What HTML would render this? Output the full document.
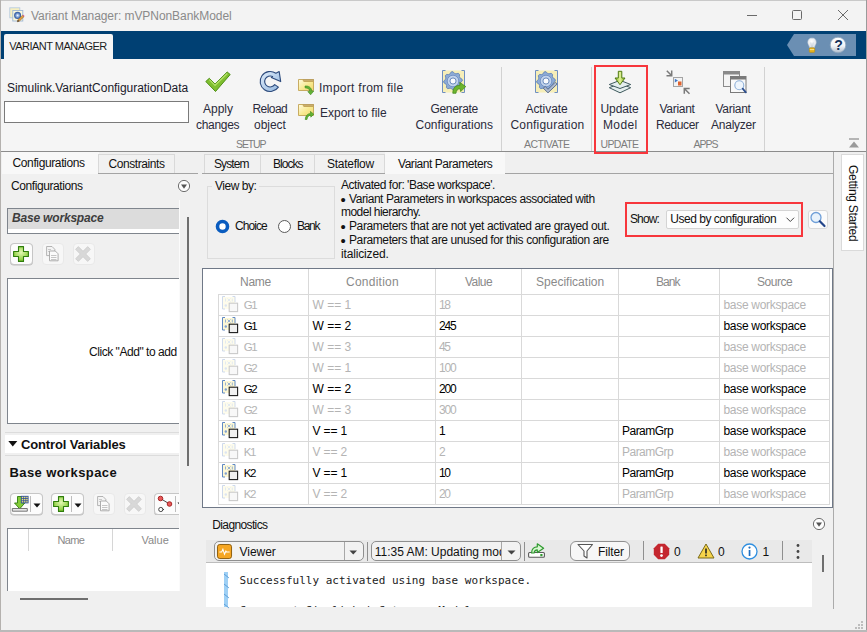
<!DOCTYPE html>
<html lang="en"><head><meta charset="utf-8"><title>Variant Manager: mVPNonBankModel</title>
<style>
html,body{margin:0;padding:0}
body{width:867px;height:632px;overflow:hidden;position:relative;background:#f0f0f0;font-family:"Liberation Sans",sans-serif;font-size:12px;color:#000}
.t{position:absolute;white-space:nowrap}
.a{position:absolute;box-sizing:border-box}
svg{position:absolute;overflow:visible}
</style></head><body>
<div class="a" style="left:0px;top:0px;width:867px;height:632px;background:#f0f0f0"></div>
<div class="a" style="left:1px;top:1px;width:865px;height:30px;background:#f3f3f3"></div>
<svg style="left:9px;top:7px" width="16" height="16" viewBox="0 0 16 16">
<rect x=".8" y=".8" width="10" height="10" fill="#f6efc0" stroke="#b7cbe0" stroke-width=".9"/>
<rect x="3.800" y="3.500" width="10" height="10.500" fill="#fbf8dc" stroke="#9db7d4" stroke-width=".9"/>
<circle cx="8.600" cy="8.400" r="2.900" fill="#8fafe0" stroke="#3f66a8" stroke-width="1.300"/>
<circle cx="8.600" cy="8.400" r=".9" fill="#f4f7fc"/>
<path d="M8.300 14.800 L8.900 12.700 L13.600 8.300 L15 9.700 L10.300 14.200 Z" fill="#e0a040" stroke="#8a5a20" stroke-width=".5"/>
<path d="M13.600 8.300 L14.300 7.700 L15.600 9 L15 9.700 Z" fill="#e0508a"/>
<path d="M8.300 14.800 L8.900 12.700 L10.300 14.200 Z" fill="#3a3a3a"/>
</svg><span class="t" style='left:31.00px;top:7.50px;font-size:12px;line-height:16px;color:#8a8a8a;letter-spacing:-0.061px;'>Variant Manager: mVPNonBankModel</span><svg style="left:740px;top:5px" width="120" height="22" viewBox="0 0 120 22">
<path d="M7 10.5h10" stroke="#6a6a6a" stroke-width="1" fill="none"/>
<rect x="52.5" y="5.5" width="9" height="9" fill="none" stroke="#6a6a6a" stroke-width="1" rx="1"/>
<path d="M98 5l10 10M108 5l-10 10" stroke="#6a6a6a" stroke-width="1" fill="none"/>
</svg><div class="a" style="left:1px;top:31px;width:865px;height:28px;background:#004073"></div>
<div class="a" style="left:4px;top:34px;width:109px;height:25px;background:#f5f5f5;border-radius:2px 2px 0 0"></div>
<span class="t" style='left:9.30px;top:39.00px;font-size:11px;line-height:15px;color:#1c1c1c;letter-spacing:-0.528px;'>VARIANT MANAGER</span><svg style="left:786px;top:33px" width="72" height="24" viewBox="0 0 72 24">
<defs><linearGradient id="hg" x1="0" y1="0" x2="0" y2="1"><stop offset="0" stop-color="#ffffff"/><stop offset=".55" stop-color="#f1f4f8"/><stop offset="1" stop-color="#aebccc"/></linearGradient>
<radialGradient id="bg" cx=".45" cy=".35" r=".7"><stop offset="0" stop-color="#ffffff"/><stop offset="1" stop-color="#d9dfe6"/></radialGradient></defs>
<path d="M1 12 L8 1 H70 V23 H8 Z" fill="#6b8fb3"/>
<path d="M26 5c-2.700 0-4.200 2.100-4.200 4.200 0 2 1.400 3.200 1.800 5.300h4.800c.4-2.100 1.800-3.300 1.800-5.300 0-2.100-1.500-4.200-4.200-4.200z" fill="url(#bg)" stroke="#cfd5dc" stroke-width=".5"/>
<path d="M24.800 9.500 L25.500 14 M27.200 9.500 L26.500 14" stroke="#b9c4d0" stroke-width=".6" fill="none"/>
<rect x="23.300" y="14.800" width="5.400" height="4.600" rx="1" fill="#e3b21f" stroke="#b8860b" stroke-width=".5"/>
<path d="M23.800 16.600h4.400" stroke="#fff3b0" stroke-width=".8"/>
<circle cx="52" cy="12" r="7.800" fill="url(#hg)" stroke="#8ea4bc" stroke-width=".8"/>
</svg><span class="t" style='left:834.20px;top:35.80px;font-size:14px;line-height:18px;color:#14315a;font-weight:bold;'>?</span><div class="a" style="left:1px;top:59px;width:865px;height:92px;background:#f5f5f5"></div>
<div class="a" style="left:1px;top:151px;width:865px;height:1px;background:#8c8c8c"></div>
<span class="t" style='left:7.00px;top:80.00px;font-size:12px;line-height:16px;color:#1a1a2a;letter-spacing:-0.043px;'>Simulink.VariantConfigurationData</span><div class="a" style="left:4px;top:101px;width:185px;height:22px;background:#fff;border:1px solid #7a7a7a"></div>
<div class="a" style="left:501px;top:67px;width:1px;height:84px;background:#d2d2d2"></div>
<div class="a" style="left:591px;top:67px;width:1px;height:84px;background:#d2d2d2"></div>
<div class="a" style="left:764px;top:67px;width:1px;height:84px;background:#d2d2d2"></div>
<span class="t" style='left:203.00px;top:101.00px;font-size:12px;line-height:16px;color:#2b2b3b;letter-spacing:-0.004px;'>Apply</span><span class="t" style='left:196.00px;top:117.00px;font-size:12px;line-height:16px;color:#2b2b3b;letter-spacing:-0.312px;'>changes</span><span class="t" style='left:252.50px;top:101.00px;font-size:12px;line-height:16px;color:#2b2b3b;letter-spacing:-0.571px;'>Reload</span><span class="t" style='left:254.00px;top:117.00px;font-size:12px;line-height:16px;color:#2b2b3b;letter-spacing:-0.037px;'>object</span><span class="t" style='left:319.00px;top:80.00px;font-size:12px;line-height:16px;color:#2b2b3b;letter-spacing:0.277px;'>Import from file</span><span class="t" style='left:320.00px;top:105.00px;font-size:12px;line-height:16px;color:#2b2b3b;letter-spacing:-0.002px;'>Export to file</span><span class="t" style='left:430.50px;top:101.00px;font-size:12px;line-height:16px;color:#2b2b3b;letter-spacing:-0.337px;'>Generate</span><span class="t" style='left:415.50px;top:117.00px;font-size:12px;line-height:16px;color:#2b2b3b;letter-spacing:0.009px;'>Configurations</span><span class="t" style='left:525.50px;top:101.00px;font-size:12px;line-height:16px;color:#2b2b3b;letter-spacing:-0.073px;'>Activate</span><span class="t" style='left:510.50px;top:117.00px;font-size:12px;line-height:16px;color:#2b2b3b;letter-spacing:0.191px;'>Configuration</span><span class="t" style='left:600.50px;top:101.00px;font-size:12px;line-height:16px;color:#2b2b3b;letter-spacing:-0.104px;'>Update</span><span class="t" style='left:603.00px;top:117.00px;font-size:12px;line-height:16px;color:#2b2b3b;letter-spacing:0.371px;'>Model</span><span class="t" style='left:659.50px;top:101.00px;font-size:12px;line-height:16px;color:#2b2b3b;letter-spacing:-0.299px;'>Variant</span><span class="t" style='left:656.00px;top:117.00px;font-size:12px;line-height:16px;color:#2b2b3b;letter-spacing:-0.394px;'>Reducer</span><span class="t" style='left:715.50px;top:101.00px;font-size:12px;line-height:16px;color:#2b2b3b;letter-spacing:-0.299px;'>Variant</span><span class="t" style='left:711.00px;top:117.00px;font-size:12px;line-height:16px;color:#2b2b3b;letter-spacing:-0.242px;'>Analyzer</span><span class="t" style='left:236.00px;top:136.75px;font-size:10.5px;line-height:14.5px;color:#7d7d7d;letter-spacing:-1.126px;'>SETUP</span><span class="t" style='left:524.00px;top:136.75px;font-size:10.5px;line-height:14.5px;color:#7d7d7d;letter-spacing:-0.540px;'>ACTIVATE</span><span class="t" style='left:600.50px;top:136.75px;font-size:10.5px;line-height:14.5px;color:#7d7d7d;letter-spacing:-0.661px;'>UPDATE</span><span class="t" style='left:693.50px;top:136.75px;font-size:10.5px;line-height:14.5px;color:#7d7d7d;letter-spacing:-1.003px;'>APPS</span><svg style="left:204px;top:70px" width="28" height="23" viewBox="0 0 28 23">
<path d="M1.800 11.500 L5.300 8.300 L11 14 L23.200 2 L26.200 4.500 L11.500 21.500 Z" fill="#7fbf2f" stroke="#4e8f16" stroke-width="1" stroke-linejoin="round"/>
<path d="M5.400 9.700 L11 15.300 L23.300 3.500" fill="none" stroke="#b5e06a" stroke-width="1.200"/>
</svg><svg style="left:258px;top:69px" width="24" height="24" viewBox="0 0 24 24">
<defs><linearGradient id="rg" x1="0" y1="0" x2="1" y2="1"><stop offset="0" stop-color="#e2eefa"/><stop offset="1" stop-color="#8fb4de"/></linearGradient></defs>
<path d="M17.900 4.300 A10 10 0 1 0 20.400 18.100 L16.700 15.600 A5.500 5.500 0 1 1 14.600 7.500 L13.300 8.600 L22.700 12.600 L21.200 2.600 Z" fill="url(#rg)" stroke="#2c4a7c" stroke-width="1.100" stroke-linejoin="round"/>
</svg><svg style="left:298px;top:78px" width="18" height="18" viewBox="0 0 18 18">
<defs><linearGradient id="fg1" x1="0" y1="0" x2="1" y2="1"><stop offset="0" stop-color="#fffbe0"/><stop offset=".55" stop-color="#f8e990"/><stop offset="1" stop-color="#efd76e"/></linearGradient></defs>
<rect x="4.500" y="1.500" width="11" height="3" fill="#c9ad6c" stroke="#b3944e" stroke-width=".8"/>
<path d="M.5 1.500 H4.800 L5.800 3.500 H15.500 V12.500 H.5 Z" fill="url(#fg1)" stroke="#c2a455" stroke-width=".9" stroke-linejoin="round"/>
<path d="M7 8 C11 7.600 13.600 9.800 13.800 13.200 L15.800 13 L12.600 16.800 L9.800 13.600 L11.800 13.400 C11.600 11 10 9.800 7.200 10 Z" fill="#62b234" stroke="#3c8a1c" stroke-width=".6" stroke-linejoin="round"/></svg><svg style="left:298px;top:103px" width="18" height="18" viewBox="0 0 18 18">
<defs><linearGradient id="fg2" x1="0" y1="0" x2="1" y2="1"><stop offset="0" stop-color="#fffbe0"/><stop offset=".55" stop-color="#f8e990"/><stop offset="1" stop-color="#efd76e"/></linearGradient></defs>
<rect x="4.500" y="1.500" width="11" height="3" fill="#c9ad6c" stroke="#b3944e" stroke-width=".8"/>
<path d="M.5 1.500 H4.800 L5.800 3.500 H15.500 V12.500 H.5 Z" fill="url(#fg2)" stroke="#c2a455" stroke-width=".9" stroke-linejoin="round"/>
<path d="M7.200 16.500 C7.400 12.800 9.600 10.600 12.600 10.400 L12.400 8.400 L15.800 11.200 L12.800 14.200 L12.700 12.200 C10.600 12.400 9.400 13.800 9 16.500 Z" fill="#62b234" stroke="#3c8a1c" stroke-width=".6" stroke-linejoin="round"/></svg><svg style="left:442px;top:70px" width="25" height="25" viewBox="0 0 25 25">
<rect x=".5" y=".5" width="22" height="22" fill="#f6eeb8" stroke="none"/>
<path d="M3.500 .5 H.5 V22.500 H3.500 M19.500 .5 H22.500 V22.500 H19.500" fill="none" stroke="#6f8fc0" stroke-width="1"/>
<polygon points="20.12,9.19 20.30,11.00 18.57,12.51 18.13,13.95 18.73,16.17 17.58,17.58 15.29,17.42 13.95,18.13 12.81,20.12 11.00,20.30 9.49,18.57 8.05,18.13 5.83,18.73 4.42,17.58 4.58,15.29 3.87,13.95 1.88,12.81 1.70,11.00 3.43,9.49 3.87,8.05 3.27,5.83 4.42,4.42 6.71,4.58 8.05,3.87 9.19,1.88 11.00,1.70 12.51,3.43 13.95,3.87 16.17,3.27 17.58,4.42 17.42,6.71 18.13,8.05" fill="#8dabd6" stroke="#5c7fb5" stroke-width=".8" stroke-linejoin="round"/><circle cx="11" cy="11" r="5.766" fill="#c3d4ec" stroke="#6b8cc0" stroke-width=".8"/><circle cx="11" cy="11" r="3.069" fill="#fbfcfe" stroke="#5c7fb5" stroke-width=".9"/>
<path d="M10.800 23.300 C10.800 17.800 13.500 15.300 18 15.300 L17.700 12.300 L23.800 16.600 L18.600 21.600 L18.300 18.800 C15.500 18.800 14.300 20.300 14 23.300 Z" fill="#6cb52d" stroke="#3f8417" stroke-width=".7"/>
</svg><svg style="left:535px;top:70px" width="25" height="25" viewBox="0 0 25 25">
<rect x=".5" y=".5" width="22" height="22" fill="#f6eeb8" stroke="none"/>
<path d="M3.500 .5 H.5 V22.500 H3.500 M19.500 .5 H22.500 V22.500 H19.500" fill="none" stroke="#6f8fc0" stroke-width="1"/>
<polygon points="20.12,9.19 20.30,11.00 18.57,12.51 18.13,13.95 18.73,16.17 17.58,17.58 15.29,17.42 13.95,18.13 12.81,20.12 11.00,20.30 9.49,18.57 8.05,18.13 5.83,18.73 4.42,17.58 4.58,15.29 3.87,13.95 1.88,12.81 1.70,11.00 3.43,9.49 3.87,8.05 3.27,5.83 4.42,4.42 6.71,4.58 8.05,3.87 9.19,1.88 11.00,1.70 12.51,3.43 13.95,3.87 16.17,3.27 17.58,4.42 17.42,6.71 18.13,8.05" fill="#8dabd6" stroke="#5c7fb5" stroke-width=".8" stroke-linejoin="round"/><circle cx="11" cy="11" r="5.766" fill="#c3d4ec" stroke="#6b8cc0" stroke-width=".8"/><circle cx="11" cy="11" r="3.069" fill="#fbfcfe" stroke="#5c7fb5" stroke-width=".9"/>
<path d="M8.300 18.200 L10.200 16.500 L13 19.300 L20.300 12.200 L22.200 14 L13 22.800 Z" fill="#aebbd0" stroke="#4f6388" stroke-width=".9" stroke-linejoin="round"/>
</svg><svg style="left:608px;top:70px" width="24" height="24" viewBox="0 0 24 24">
<path d="M1.300 17.700 L12 13.500 L22.700 17.700 L12 22.800 Z" fill="#e4eeee" stroke="#3f5a5e" stroke-width="1" stroke-linejoin="round"/>
<path d="M1.300 14.500 L12 10.300 L22.700 14.500 L12 18.500 Z" fill="#e4eeee" stroke="#3f5a5e" stroke-width="1" stroke-linejoin="round"/>
<defs><linearGradient id="ug" x1="0" y1="0" x2="1" y2="0"><stop offset="0" stop-color="#86b520"/><stop offset=".5" stop-color="#e2f29a"/><stop offset="1" stop-color="#86b520"/></linearGradient></defs><path d="M10.300 1.300 H13.800 V8 H17 L12 14.700 L7 8 H10.300 Z" fill="url(#ug)" stroke="#4f7a12" stroke-width="1" stroke-linejoin="round"/>
</svg><svg style="left:666px;top:69px" width="25" height="26" viewBox="0 0 25 26">
<path d="M.8 1.800 L5.500 6.500 M5.700 1.500 V6.700 H.5" fill="none" stroke="#7a7a7a" stroke-width="1.500"/>
<path d="M23.500 24.700 L18.500 19.700 M18.300 24.700 V19.500 H23.700" fill="none" stroke="#7a7a7a" stroke-width="1.500"/>
<rect x="7.500" y="8.500" width="9" height="9" fill="#f3f3f3" stroke="#a4a4a4" stroke-width="1"/>
<path d="M8.800 9.800 L12 11.600 L8.800 13.400 Z" fill="#3f78c8"/>
<rect x="12" y="12.500" width="3.500" height="4" fill="#e0632f"/>
</svg><svg style="left:722px;top:70px" width="26" height="25" viewBox="0 0 26 25">
<rect x="1.500" y="1.500" width="16" height="15" fill="#f4f4f4" stroke="#8a8a8a"/>
<rect x="1.500" y="1.500" width="16" height="3" fill="#8a8a8a"/>
<rect x="8.500" y="6.500" width="15.500" height="16" fill="#f9f9f9" stroke="#7a7a7a"/>
<rect x="8.500" y="6.500" width="15.500" height="3" fill="#7a7a7a"/>
<circle cx="17.300" cy="15.200" r="4.500" fill="#eef5fc" stroke="#8fb0d8" stroke-width="1.100"/>
<path d="M20.700 18.700 L23.800 22.300" stroke="#2d4f8f" stroke-width="1.800" stroke-linecap="round"/>
</svg><div class="a" style="left:594px;top:65px;width:54px;height:89px;border:2px solid #f7363c"></div>
<svg style="left:848px;top:138px" width="12" height="11" viewBox="0 0 12 11">
<path d="M1 1 H11" stroke="#9a9a9a" stroke-width="1.400"/>
<path d="M6 3.500 L11 9.500 H1 Z" fill="#9a9a9a"/>
</svg><div class="a" style="left:2px;top:152px;width:96.5px;height:22px;background:#f8f8f8"></div>
<div class="a" style="left:98px;top:154px;width:77px;height:19px;border:1px solid #d9d9d9;border-bottom:none;background:#f1f1f1"></div>
<div class="a" style="left:98px;top:173px;width:100px;height:1px;background:#a4a4a4"></div>
<span class="t" style='left:12.50px;top:155.00px;font-size:12px;line-height:16px;color:#111;letter-spacing:-0.375px;'>Configurations</span><span class="t" style='left:108.50px;top:155.50px;font-size:12px;line-height:16px;color:#111;letter-spacing:-0.419px;'>Constraints</span><span class="t" style='left:11.00px;top:177.80px;font-size:12px;line-height:16px;color:#111;letter-spacing:-0.414px;'>Configurations</span><svg style="left:177px;top:179px" width="14" height="14" viewBox="0 0 14 14">
<circle cx="7" cy="7" r="5.600" fill="#fdfdfd" stroke="#6e6e6e" stroke-width="1"/>
<path d="M4 5.500 H10 L7 9.800 Z" fill="#555"/></svg><div class="a" style="left:7px;top:208px;width:172px;height:26px;background:#fff;border:1px solid #7f858d;border-right:none"></div>
<div class="a" style="left:8px;top:209px;width:171px;height:19.5px;background:#dcdcdc"></div>
<span class="t" style='left:12.00px;top:210.00px;font-size:12px;line-height:16px;color:#3e3e3e;font-weight:bold;font-style:italic;letter-spacing:-0.183px;'>Base workspace</span><div class="a" style="left:10px;top:243px;width:22.5px;height:21.5px;border:1px solid #c6c6c6;border-radius:4px;background:#fcfcfc;box-shadow:0 .5px 0 #bdbdbd;"><svg style="left:2px;top:2px" width="16" height="16" viewBox="0 0 16 16"><defs><radialGradient id="pg1" cx=".5" cy=".4" r=".6"><stop offset="0" stop-color="#e4f8b4"/><stop offset="1" stop-color="#7ec82c"/></radialGradient></defs><path d="M5.500 .6 H10.500 V5.500 H15.400 V10.500 H10.500 V15.400 H5.500 V10.500 H.6 V5.500 H5.500 Z" fill="url(#pg1)" stroke="#2f7d0c" stroke-width="1.100" stroke-linejoin="round"/></svg></div>
<div class="a" style="left:41.5px;top:243px;width:22px;height:21.5px;border:1px solid #e9e9e9;border-radius:4px;background:#f7f7f7;"><svg style="left:3px;top:2px" width="14" height="16" viewBox="0 0 14 16"><path d="M.6 .5 H6 L8.800 3.300 V9.600 H.6 Z" fill="#f4f4f4" stroke="#adadad" stroke-width=".9"/><path d="M2 3.500h3M2 5.500h2" stroke="#c4c4c4" stroke-width=".9"/><path d="M3.500 5 H9.300 L12.100 7.800 V14.800 H3.500 Z" fill="#fbfbfb" stroke="#a6a6a6" stroke-width=".9"/><path d="M5 9.500h5.500M5 11.500h5.500M5 13.500h5.500" stroke="#c6c6c6" stroke-width="1"/></svg></div>
<div class="a" style="left:72.5px;top:243px;width:22px;height:21.5px;border:1px solid #e9e9e9;border-radius:4px;background:#f7f7f7;"><svg style="left:1.5px;top:2px" width="16" height="16" viewBox="0 0 16 16"><path d="M.6 3.300 L3.300 .6 L8 5.300 L12.700 .6 L15.400 3.300 L10.700 8 L15.400 12.700 L12.700 15.400 L8 10.700 L3.300 15.400 L.6 12.700 L5.300 8 Z" fill="#d8d8d8" stroke="#cccccc" stroke-width=".8" stroke-linejoin="round"/></svg></div>
<div class="a" style="left:7px;top:278px;width:172px;height:145.5px;background:#fff;border:1px solid #7f858d;border-right:none"></div>
<span class="t" style='left:89.00px;top:344.00px;font-size:12px;line-height:16px;color:#111;letter-spacing:-0.455px;'>Click "Add" to add</span><div class="a" style="left:179px;top:200px;width:1px;height:391px;background:#fbfbfb"></div>
<div class="a" style="left:187px;top:217px;width:2px;height:249px;background:#6f6f6f"></div>
<div class="a" style="left:5px;top:432px;width:174px;height:1px;background:#dcdcdc"></div>
<div class="a" style="left:5px;top:434.5px;width:174px;height:18px;background:#fff"></div>
<div class="a" style="left:5px;top:454.5px;width:174px;height:1px;background:#dcdcdc"></div>
<svg style="left:8px;top:440px" width="10" height="8" viewBox="0 0 10 8"><path d="M.3 1 H9.300 L4.800 6.500 Z" fill="#111"/></svg><span class="t" style='left:21.00px;top:435.50px;font-size:13px;line-height:17px;color:#111;font-weight:bold;letter-spacing:-0.137px;'>Control Variables</span><span class="t" style='left:9.50px;top:464.00px;font-size:13px;line-height:17px;color:#111;font-weight:bold;letter-spacing:0.411px;'>Base workspace</span><div class="a" style="left:10px;top:493px;width:32.5px;height:21.5px;border:1px solid #c6c6c6;border-radius:4px;background:#fcfcfc;box-shadow:0 .5px 0 #bdbdbd;"><svg style="left:1px;top:1px" width="18" height="18" viewBox="0 0 18 18"><path d="M5.500 1.500 H10.300 V8 H12.800 L7.700 13.800 L2.500 8 H5.500 Z" fill="#84cc38" stroke="#2f7d0c" stroke-width=".9" stroke-linejoin="round"/><rect x="9.300" y="1.300" width="6.800" height="6.600" fill="#f6e873" stroke="#2f4fa0" stroke-width=".9"/><path d="M9.300 3.500h6.800M9.300 5.700h6.800M11.600 1.300v6.600M13.800 1.300v6.600" stroke="#2f4fa0" stroke-width=".8"/><path d="M.3 13.500 H15.300 V16.200 H.3 Z" fill="#e6e6e6" stroke="#6a6a6a" stroke-width=".9"/></svg><div class="a" style="left:19px;top:2px;width:1px;height:16px;background:#bdbdbd"></div><svg style="left:21.7px;top:8.5px" width="8" height="5" viewBox="0 0 8 5"><path d="M.5 .5 H7.500 L4 4.500 Z" fill="#111"/></svg></div>
<div class="a" style="left:51px;top:493px;width:32.5px;height:21.5px;border:1px solid #c6c6c6;border-radius:4px;background:#fcfcfc;box-shadow:0 .5px 0 #bdbdbd;"><svg style="left:1.2px;top:1.8px" width="16" height="16" viewBox="0 0 16 16"><defs><radialGradient id="pg2" cx=".5" cy=".4" r=".6"><stop offset="0" stop-color="#e4f8b4"/><stop offset="1" stop-color="#7ec82c"/></radialGradient></defs><path d="M5.500 .6 H10.500 V5.500 H15.400 V10.500 H10.500 V15.400 H5.500 V10.500 H.6 V5.500 H5.500 Z" fill="url(#pg2)" stroke="#2f7d0c" stroke-width="1.100" stroke-linejoin="round"/></svg><div class="a" style="left:19px;top:2px;width:1px;height:16px;background:#bdbdbd"></div><svg style="left:21.7px;top:8.5px" width="8" height="5" viewBox="0 0 8 5"><path d="M.5 .5 H7.500 L4 4.500 Z" fill="#111"/></svg></div>
<div class="a" style="left:92.5px;top:493px;width:22px;height:21.5px;border:1px solid #e9e9e9;border-radius:4px;background:#f7f7f7;"><svg style="left:3px;top:2.3px" width="14" height="16" viewBox="0 0 14 16"><path d="M.6 .5 H6 L8.800 3.300 V9.600 H.6 Z" fill="#f4f4f4" stroke="#adadad" stroke-width=".9"/><path d="M2 3.500h3M2 5.500h2" stroke="#c4c4c4" stroke-width=".9"/><path d="M3.500 5 H9.300 L12.100 7.800 V14.800 H3.500 Z" fill="#fbfbfb" stroke="#a6a6a6" stroke-width=".9"/><path d="M5 9.500h5.500M5 11.500h5.500M5 13.500h5.500" stroke="#c6c6c6" stroke-width="1"/></svg></div>
<div class="a" style="left:123.5px;top:493px;width:22px;height:21.5px;border:1px solid #e9e9e9;border-radius:4px;background:#f7f7f7;"><svg style="left:1.2px;top:2px" width="16" height="16" viewBox="0 0 16 16"><path d="M.6 3.300 L3.300 .6 L8 5.300 L12.700 .6 L15.400 3.300 L10.700 8 L15.400 12.700 L12.700 15.400 L8 10.700 L3.300 15.400 L.6 12.700 L5.300 8 Z" fill="#d8d8d8" stroke="#cccccc" stroke-width=".8" stroke-linejoin="round"/></svg></div>
<div class="a" style="left:154px;top:493px;width:25px;height:21.500px;overflow:hidden"><div class="a" style="left:0px;top:0px;width:33px;height:21.5px;border:1px solid #c6c6c6;border-radius:4px;background:#fcfcfc;box-shadow:0 .5px 0 #bdbdbd;"><svg style="left:2px;top:0.5px" width="16" height="18" viewBox="0 0 16 18"><path d="M3.500 3.500 L12.500 9 M3.500 14.500 H7" stroke="#444" stroke-width="1"/><circle cx="3.500" cy="3.500" r="2.300" fill="#e85a5a" stroke="#a01818" stroke-width=".9"/><circle cx="12.500" cy="9" r="2.300" fill="#e85a5a" stroke="#a01818" stroke-width=".9"/><circle cx="3.800" cy="14.500" r="2.100" fill="#fff" stroke="#333" stroke-width=".9"/></svg><div class="a" style="left:19.500px;top:2px;width:1px;height:16px;background:#bdbdbd"></div><svg style="left:22px;top:8px" width="8" height="5" viewBox="0 0 8 5"><path d="M.5 .5 H7.500 L4 4.500 Z" fill="#111"/></svg></div>
</div><div class="a" style="left:7px;top:528px;width:172px;height:63px;background:#fff;border:1px solid #7f858d;border-right:none;border-bottom:none"></div>
<div class="a" style="left:28px;top:529px;width:1px;height:22px;background:#d6d6d6"></div>
<div class="a" style="left:112px;top:529px;width:1px;height:22px;background:#d6d6d6"></div>
<span class="t" style='left:57.40px;top:532.50px;font-size:11px;line-height:15px;color:#8a8a8a;letter-spacing:-0.608px;'>Name</span><span class="t" style='left:141.40px;top:532.50px;font-size:11px;line-height:15px;color:#8a8a8a;letter-spacing:0.025px;'>Value</span><div class="a" style="left:20px;top:598px;width:68px;height:2px;background:#6f6f6f"></div>
<div class="a" style="left:204px;top:154px;width:57px;height:19px;border:1px solid #d9d9d9;border-bottom:none;background:#f1f1f1"></div>
<div class="a" style="left:260px;top:154px;width:55px;height:19px;border:1px solid #d9d9d9;border-bottom:none;background:#f1f1f1"></div>
<div class="a" style="left:314px;top:154px;width:71px;height:19px;border:1px solid #d9d9d9;border-bottom:none;background:#f1f1f1"></div>
<div class="a" style="left:202px;top:173px;width:631px;height:1px;background:#a4a4a4"></div>
<div class="a" style="left:384.5px;top:152px;width:120.5px;height:22px;background:#f8f8f8"></div>
<span class="t" style='left:214.00px;top:156.00px;font-size:12px;line-height:16px;color:#111;letter-spacing:-0.902px;'>System</span><span class="t" style='left:273.00px;top:156.00px;font-size:12px;line-height:16px;color:#111;letter-spacing:-0.969px;'>Blocks</span><span class="t" style='left:327.00px;top:156.00px;font-size:12px;line-height:16px;color:#111;letter-spacing:-0.274px;'>Stateflow</span><span class="t" style='left:398.00px;top:155.60px;font-size:12px;line-height:16px;color:#111;letter-spacing:-0.458px;'>Variant Parameters</span><div class="a" style="left:206.5px;top:185.5px;width:128.5px;height:73.5px;border:1px solid #dcdcdc"></div>
<div class="a" style="left:212px;top:180px;width:47px;height:10px;background:#f0f0f0"></div>
<span class="t" style='left:215.00px;top:177.50px;font-size:12px;line-height:16px;color:#111;letter-spacing:-0.472px;'>View by:</span><svg style="left:215px;top:218.500px" width="15" height="15" viewBox="0 0 15 15">
<circle cx="7.500" cy="7.500" r="5" fill="#fff" stroke="#0a5cbf" stroke-width="3.600"/></svg><span class="t" style='left:235.00px;top:218.00px;font-size:12px;line-height:16px;color:#111;letter-spacing:-0.936px;'>Choice</span><svg style="left:277px;top:218.500px" width="15" height="15" viewBox="0 0 15 15">
<circle cx="7.500" cy="7.500" r="6" fill="#fff" stroke="#5a5a5a" stroke-width="1"/></svg><span class="t" style='left:297.00px;top:218.00px;font-size:12px;line-height:16px;color:#111;letter-spacing:-1.300px;'>Bank</span><span class="t" style='left:341.00px;top:177.00px;font-size:12px;line-height:16px;color:#111;letter-spacing:-0.484px;'>Activated for: 'Base workspace'.</span><span class="t" style='left:340.50px;top:190.00px;font-size:15px;line-height:19px;color:#111;'>•</span><span class="t" style='left:349.00px;top:191.00px;font-size:12px;line-height:16px;color:#111;letter-spacing:-0.448px;'>Variant Parameters in workspaces associated with</span><span class="t" style='left:341.00px;top:204.00px;font-size:12px;line-height:16px;color:#111;letter-spacing:-0.532px;'>model hierarchy.</span><span class="t" style='left:340.50px;top:217.00px;font-size:15px;line-height:19px;color:#111;'>•</span><span class="t" style='left:349.00px;top:218.00px;font-size:12px;line-height:16px;color:#111;letter-spacing:-0.384px;'>Parameters that are not yet activated are grayed out.</span><span class="t" style='left:340.50px;top:231.00px;font-size:15px;line-height:19px;color:#111;'>•</span><span class="t" style='left:349.00px;top:232.00px;font-size:12px;line-height:16px;color:#111;letter-spacing:-0.397px;'>Parameters that are unused for this configuration are</span><span class="t" style='left:341.00px;top:245.50px;font-size:12px;line-height:16px;color:#111;letter-spacing:-0.152px;'>italicized.</span><div class="a" style="left:625px;top:202px;width:178px;height:35px;border:2px solid #f7363c"></div>
<span class="t" style='left:630.00px;top:210.60px;font-size:12px;line-height:16px;color:#111;letter-spacing:-0.879px;'>Show:</span><div class="a" style="left:666px;top:209.5px;width:133px;height:19px;background:#fdfdfd;border:1px solid #d4d4d4;border-radius:2px"></div>
<span class="t" style='left:670.30px;top:210.50px;font-size:12px;line-height:16px;color:#111;letter-spacing:-0.485px;'>Used by configuration</span><svg style="left:786px;top:217px" width="9" height="6" viewBox="0 0 9 6"><path d="M.5 .7 L4.300 4.500 L8.100 .7" fill="none" stroke="#444" stroke-width="1"/></svg><div class="a" style="left:808px;top:209.5px;width:20px;height:19px;background:#fbfbfb;border:1px solid #d9d9d9;border-radius:3px"></div>
<svg style="left:808.800px;top:209.600px" width="18" height="18" viewBox="0 0 18 18">
<circle cx="7" cy="7.500" r="5" fill="#e8f2fb" stroke="#6f9fd8" stroke-width="1.300"/>
<path d="M10.800 11.300 L15.500 16" stroke="#23458a" stroke-width="2.200" stroke-linecap="round"/></svg><div class="a" style="left:202px;top:268px;width:631px;height:240px;background:#fff;border:1px solid #6f7887"></div>
<div class="a" style="left:308px;top:269px;width:1px;height:236px;background:#d9d9d9"></div>
<div class="a" style="left:435px;top:269px;width:1px;height:236px;background:#d9d9d9"></div>
<div class="a" style="left:521px;top:269px;width:1px;height:236px;background:#d9d9d9"></div>
<div class="a" style="left:618px;top:269px;width:1px;height:236px;background:#d9d9d9"></div>
<div class="a" style="left:719px;top:269px;width:1px;height:236px;background:#d9d9d9"></div>
<div class="a" style="left:218px;top:294px;width:1px;height:211px;background:#d9d9d9"></div>
<div class="a" style="left:829px;top:269px;width:1px;height:236px;background:#d9d9d9"></div>
<div class="a" style="left:218px;top:294px;width:612px;height:1px;background:#d9d9d9"></div>
<div class="a" style="left:218px;top:315px;width:612px;height:1px;background:#d9d9d9"></div>
<div class="a" style="left:218px;top:336px;width:612px;height:1px;background:#d9d9d9"></div>
<div class="a" style="left:218px;top:357px;width:612px;height:1px;background:#d9d9d9"></div>
<div class="a" style="left:218px;top:378px;width:612px;height:1px;background:#d9d9d9"></div>
<div class="a" style="left:218px;top:399px;width:612px;height:1px;background:#d9d9d9"></div>
<div class="a" style="left:218px;top:420px;width:612px;height:1px;background:#d9d9d9"></div>
<div class="a" style="left:218px;top:441px;width:612px;height:1px;background:#d9d9d9"></div>
<div class="a" style="left:218px;top:462px;width:612px;height:1px;background:#d9d9d9"></div>
<div class="a" style="left:218px;top:483px;width:612px;height:1px;background:#d9d9d9"></div>
<div class="a" style="left:218px;top:504px;width:612px;height:1px;background:#d9d9d9"></div>
<span class="t" style='left:240.00px;top:273.50px;font-size:12px;line-height:16px;color:#8a8a8a;letter-spacing:-0.279px;'>Name</span><span class="t" style='left:346.00px;top:273.50px;font-size:12px;line-height:16px;color:#8a8a8a;letter-spacing:0.247px;'>Condition</span><span class="t" style='left:465.00px;top:273.50px;font-size:12px;line-height:16px;color:#8a8a8a;letter-spacing:-0.532px;'>Value</span><span class="t" style='left:536.00px;top:273.50px;font-size:12px;line-height:16px;color:#8a8a8a;letter-spacing:0.011px;'>Specification</span><span class="t" style='left:656.00px;top:273.50px;font-size:12px;line-height:16px;color:#8a8a8a;letter-spacing:-0.951px;'>Bank</span><span class="t" style='left:757.00px;top:273.50px;font-size:12px;line-height:16px;color:#8a8a8a;letter-spacing:-0.470px;'>Source</span><svg style="left:221.5px;top:296px" width="17" height="18" viewBox="0 0 17 18">
<rect x="1" y="1" width="12" height="12" fill="#fefcec"/>
<path d="M3 .5 H.5 V13 H3" fill="none" stroke="#c9d6ea" stroke-width=".9"/>
<path d="M10.500 .5 H13 V6" fill="none" stroke="#c9d6ea" stroke-width=".9"/>
<path d="M3.500 2.500v3M5.500 2.500l1.500 1.500l-1.500 1.500M8.500 2.500l-1.500 1.500l1.500 1.500M10.300 2.500v3" fill="none" stroke="#dbe4f2" stroke-width=".8"/>
<circle cx="3.800" cy="9.500" r="1.200" fill="#dbe4f2"/>
<rect x="7.200" y="7.200" width="8.400" height="8.400" fill="#f8f8f8" stroke="#cacaca" stroke-width="1.100"/>
</svg><span class="t" style='left:243.70px;top:298.00px;font-size:11.5px;line-height:15.5px;color:#b4b4b4;letter-spacing:-1.400px;'>G1</span><span class="t" style='left:312.50px;top:297.00px;font-size:12px;line-height:16px;color:#b4b4b4;letter-spacing:-0.002px;'>W == 1</span><span class="t" style='left:439.00px;top:297.00px;font-size:12px;line-height:16px;color:#b4b4b4;letter-spacing:-1.300px;'>18</span><span class="t" style='left:723.50px;top:297.00px;font-size:12px;line-height:16px;color:#b4b4b4;letter-spacing:-0.311px;'>base workspace</span><svg style="left:221.5px;top:317px" width="17" height="18" viewBox="0 0 17 18">
<rect x="1" y="1" width="12" height="12" fill="#fdf8d6"/>
<path d="M3 .5 H.5 V13 H3" fill="none" stroke="#4f7dbd" stroke-width=".9"/>
<path d="M10.500 .5 H13 V6" fill="none" stroke="#4f7dbd" stroke-width=".9"/>
<path d="M3.500 2.500v3M5.500 2.500l1.500 1.500l-1.500 1.500M8.500 2.500l-1.500 1.500l1.500 1.500M10.300 2.500v3" fill="none" stroke="#7f9fd0" stroke-width=".8"/>
<circle cx="3.800" cy="9.500" r="1.200" fill="#7f9fd0"/>
<rect x="7.200" y="7.200" width="8.400" height="8.400" fill="#f0f0f0" stroke="#1c1c1c" stroke-width="1.100"/>
</svg><span class="t" style='left:243.70px;top:319.00px;font-size:11.5px;line-height:15.5px;color:#000;letter-spacing:-1.400px;'>G1</span><span class="t" style='left:312.50px;top:318.00px;font-size:12px;line-height:16px;color:#000;letter-spacing:-0.002px;'>W == 2</span><span class="t" style='left:439.00px;top:318.00px;font-size:12px;line-height:16px;color:#000;letter-spacing:-1.174px;'>245</span><span class="t" style='left:723.50px;top:318.00px;font-size:12px;line-height:16px;color:#000;letter-spacing:-0.311px;'>base workspace</span><svg style="left:221.5px;top:338px" width="17" height="18" viewBox="0 0 17 18">
<rect x="1" y="1" width="12" height="12" fill="#fefcec"/>
<path d="M3 .5 H.5 V13 H3" fill="none" stroke="#c9d6ea" stroke-width=".9"/>
<path d="M10.500 .5 H13 V6" fill="none" stroke="#c9d6ea" stroke-width=".9"/>
<path d="M3.500 2.500v3M5.500 2.500l1.500 1.500l-1.500 1.500M8.500 2.500l-1.500 1.500l1.500 1.500M10.300 2.500v3" fill="none" stroke="#dbe4f2" stroke-width=".8"/>
<circle cx="3.800" cy="9.500" r="1.200" fill="#dbe4f2"/>
<rect x="7.200" y="7.200" width="8.400" height="8.400" fill="#f8f8f8" stroke="#cacaca" stroke-width="1.100"/>
</svg><span class="t" style='left:243.70px;top:340.00px;font-size:11.5px;line-height:15.5px;color:#b4b4b4;letter-spacing:-1.400px;'>G1</span><span class="t" style='left:312.50px;top:339.00px;font-size:12px;line-height:16px;color:#b4b4b4;letter-spacing:-0.002px;'>W == 3</span><span class="t" style='left:439.00px;top:339.00px;font-size:12px;line-height:16px;color:#b4b4b4;letter-spacing:-1.300px;'>45</span><span class="t" style='left:723.50px;top:339.00px;font-size:12px;line-height:16px;color:#b4b4b4;letter-spacing:-0.311px;'>base workspace</span><svg style="left:221.5px;top:359px" width="17" height="18" viewBox="0 0 17 18">
<rect x="1" y="1" width="12" height="12" fill="#fefcec"/>
<path d="M3 .5 H.5 V13 H3" fill="none" stroke="#c9d6ea" stroke-width=".9"/>
<path d="M10.500 .5 H13 V6" fill="none" stroke="#c9d6ea" stroke-width=".9"/>
<path d="M3.500 2.500v3M5.500 2.500l1.500 1.500l-1.500 1.500M8.500 2.500l-1.500 1.500l1.500 1.500M10.300 2.500v3" fill="none" stroke="#dbe4f2" stroke-width=".8"/>
<circle cx="3.800" cy="9.500" r="1.200" fill="#dbe4f2"/>
<rect x="7.200" y="7.200" width="8.400" height="8.400" fill="#f8f8f8" stroke="#cacaca" stroke-width="1.100"/>
</svg><span class="t" style='left:243.70px;top:361.00px;font-size:11.5px;line-height:15.5px;color:#b4b4b4;letter-spacing:-1.400px;'>G2</span><span class="t" style='left:312.50px;top:360.00px;font-size:12px;line-height:16px;color:#b4b4b4;letter-spacing:-0.002px;'>W == 1</span><span class="t" style='left:439.00px;top:360.00px;font-size:12px;line-height:16px;color:#b4b4b4;letter-spacing:-1.174px;'>100</span><span class="t" style='left:723.50px;top:360.00px;font-size:12px;line-height:16px;color:#b4b4b4;letter-spacing:-0.311px;'>base workspace</span><svg style="left:221.5px;top:380px" width="17" height="18" viewBox="0 0 17 18">
<rect x="1" y="1" width="12" height="12" fill="#fdf8d6"/>
<path d="M3 .5 H.5 V13 H3" fill="none" stroke="#4f7dbd" stroke-width=".9"/>
<path d="M10.500 .5 H13 V6" fill="none" stroke="#4f7dbd" stroke-width=".9"/>
<path d="M3.500 2.500v3M5.500 2.500l1.500 1.500l-1.500 1.500M8.500 2.500l-1.500 1.500l1.500 1.500M10.300 2.500v3" fill="none" stroke="#7f9fd0" stroke-width=".8"/>
<circle cx="3.800" cy="9.500" r="1.200" fill="#7f9fd0"/>
<rect x="7.200" y="7.200" width="8.400" height="8.400" fill="#f0f0f0" stroke="#1c1c1c" stroke-width="1.100"/>
</svg><span class="t" style='left:243.70px;top:382.00px;font-size:11.5px;line-height:15.5px;color:#000;letter-spacing:-1.400px;'>G2</span><span class="t" style='left:312.50px;top:381.00px;font-size:12px;line-height:16px;color:#000;letter-spacing:-0.002px;'>W == 2</span><span class="t" style='left:439.00px;top:381.00px;font-size:12px;line-height:16px;color:#000;letter-spacing:-1.174px;'>200</span><span class="t" style='left:723.50px;top:381.00px;font-size:12px;line-height:16px;color:#000;letter-spacing:-0.311px;'>base workspace</span><svg style="left:221.5px;top:401px" width="17" height="18" viewBox="0 0 17 18">
<rect x="1" y="1" width="12" height="12" fill="#fefcec"/>
<path d="M3 .5 H.5 V13 H3" fill="none" stroke="#c9d6ea" stroke-width=".9"/>
<path d="M10.500 .5 H13 V6" fill="none" stroke="#c9d6ea" stroke-width=".9"/>
<path d="M3.500 2.500v3M5.500 2.500l1.500 1.500l-1.500 1.500M8.500 2.500l-1.500 1.500l1.500 1.500M10.300 2.500v3" fill="none" stroke="#dbe4f2" stroke-width=".8"/>
<circle cx="3.800" cy="9.500" r="1.200" fill="#dbe4f2"/>
<rect x="7.200" y="7.200" width="8.400" height="8.400" fill="#f8f8f8" stroke="#cacaca" stroke-width="1.100"/>
</svg><span class="t" style='left:243.70px;top:403.00px;font-size:11.5px;line-height:15.5px;color:#b4b4b4;letter-spacing:-1.400px;'>G2</span><span class="t" style='left:312.50px;top:402.00px;font-size:12px;line-height:16px;color:#b4b4b4;letter-spacing:-0.002px;'>W == 3</span><span class="t" style='left:439.00px;top:402.00px;font-size:12px;line-height:16px;color:#b4b4b4;letter-spacing:-1.174px;'>300</span><span class="t" style='left:723.50px;top:402.00px;font-size:12px;line-height:16px;color:#b4b4b4;letter-spacing:-0.311px;'>base workspace</span><svg style="left:221.5px;top:422px" width="17" height="18" viewBox="0 0 17 18">
<rect x="1" y="1" width="12" height="12" fill="#fdf8d6"/>
<path d="M3 .5 H.5 V13 H3" fill="none" stroke="#4f7dbd" stroke-width=".9"/>
<path d="M10.500 .5 H13 V6" fill="none" stroke="#4f7dbd" stroke-width=".9"/>
<path d="M3.500 2.500v3M5.500 2.500l1.500 1.500l-1.500 1.500M8.500 2.500l-1.500 1.500l1.500 1.500M10.300 2.500v3" fill="none" stroke="#7f9fd0" stroke-width=".8"/>
<circle cx="3.800" cy="9.500" r="1.200" fill="#7f9fd0"/>
<rect x="7.200" y="7.200" width="8.400" height="8.400" fill="#f0f0f0" stroke="#1c1c1c" stroke-width="1.100"/>
</svg><span class="t" style='left:243.70px;top:424.00px;font-size:11.5px;line-height:15.5px;color:#000;letter-spacing:-1.400px;'>K1</span><span class="t" style='left:312.50px;top:423.00px;font-size:12px;line-height:16px;color:#000;letter-spacing:-0.138px;'>V == 1</span><span class="t" style='left:439.00px;top:423.00px;font-size:12px;line-height:16px;color:#000;'>1</span><span class="t" style='left:622.00px;top:423.00px;font-size:12px;line-height:16px;color:#000;letter-spacing:-0.525px;'>ParamGrp</span><span class="t" style='left:723.50px;top:423.00px;font-size:12px;line-height:16px;color:#000;letter-spacing:-0.311px;'>base workspace</span><svg style="left:221.5px;top:443px" width="17" height="18" viewBox="0 0 17 18">
<rect x="1" y="1" width="12" height="12" fill="#fefcec"/>
<path d="M3 .5 H.5 V13 H3" fill="none" stroke="#c9d6ea" stroke-width=".9"/>
<path d="M10.500 .5 H13 V6" fill="none" stroke="#c9d6ea" stroke-width=".9"/>
<path d="M3.500 2.500v3M5.500 2.500l1.500 1.500l-1.500 1.500M8.500 2.500l-1.500 1.500l1.500 1.500M10.300 2.500v3" fill="none" stroke="#dbe4f2" stroke-width=".8"/>
<circle cx="3.800" cy="9.500" r="1.200" fill="#dbe4f2"/>
<rect x="7.200" y="7.200" width="8.400" height="8.400" fill="#f8f8f8" stroke="#cacaca" stroke-width="1.100"/>
</svg><span class="t" style='left:243.70px;top:445.00px;font-size:11.5px;line-height:15.5px;color:#b4b4b4;letter-spacing:-1.400px;'>K1</span><span class="t" style='left:312.50px;top:444.00px;font-size:12px;line-height:16px;color:#b4b4b4;letter-spacing:-0.138px;'>V == 2</span><span class="t" style='left:439.00px;top:444.00px;font-size:12px;line-height:16px;color:#b4b4b4;'>2</span><span class="t" style='left:622.00px;top:444.00px;font-size:12px;line-height:16px;color:#b4b4b4;letter-spacing:-0.525px;'>ParamGrp</span><span class="t" style='left:723.50px;top:444.00px;font-size:12px;line-height:16px;color:#b4b4b4;letter-spacing:-0.311px;'>base workspace</span><svg style="left:221.5px;top:464px" width="17" height="18" viewBox="0 0 17 18">
<rect x="1" y="1" width="12" height="12" fill="#fdf8d6"/>
<path d="M3 .5 H.5 V13 H3" fill="none" stroke="#4f7dbd" stroke-width=".9"/>
<path d="M10.500 .5 H13 V6" fill="none" stroke="#4f7dbd" stroke-width=".9"/>
<path d="M3.500 2.500v3M5.500 2.500l1.500 1.500l-1.500 1.500M8.500 2.500l-1.500 1.500l1.500 1.500M10.300 2.500v3" fill="none" stroke="#7f9fd0" stroke-width=".8"/>
<circle cx="3.800" cy="9.500" r="1.200" fill="#7f9fd0"/>
<rect x="7.200" y="7.200" width="8.400" height="8.400" fill="#f0f0f0" stroke="#1c1c1c" stroke-width="1.100"/>
</svg><span class="t" style='left:243.70px;top:466.00px;font-size:11.5px;line-height:15.5px;color:#000;letter-spacing:-1.400px;'>K2</span><span class="t" style='left:312.50px;top:465.00px;font-size:12px;line-height:16px;color:#000;letter-spacing:-0.138px;'>V == 1</span><span class="t" style='left:439.00px;top:465.00px;font-size:12px;line-height:16px;color:#000;letter-spacing:-1.300px;'>10</span><span class="t" style='left:622.00px;top:465.00px;font-size:12px;line-height:16px;color:#000;letter-spacing:-0.525px;'>ParamGrp</span><span class="t" style='left:723.50px;top:465.00px;font-size:12px;line-height:16px;color:#000;letter-spacing:-0.311px;'>base workspace</span><svg style="left:221.5px;top:485px" width="17" height="18" viewBox="0 0 17 18">
<rect x="1" y="1" width="12" height="12" fill="#fefcec"/>
<path d="M3 .5 H.5 V13 H3" fill="none" stroke="#c9d6ea" stroke-width=".9"/>
<path d="M10.500 .5 H13 V6" fill="none" stroke="#c9d6ea" stroke-width=".9"/>
<path d="M3.500 2.500v3M5.500 2.500l1.500 1.500l-1.500 1.500M8.500 2.500l-1.500 1.500l1.500 1.500M10.300 2.500v3" fill="none" stroke="#dbe4f2" stroke-width=".8"/>
<circle cx="3.800" cy="9.500" r="1.200" fill="#dbe4f2"/>
<rect x="7.200" y="7.200" width="8.400" height="8.400" fill="#f8f8f8" stroke="#cacaca" stroke-width="1.100"/>
</svg><span class="t" style='left:243.70px;top:487.00px;font-size:11.5px;line-height:15.5px;color:#b4b4b4;letter-spacing:-1.400px;'>K2</span><span class="t" style='left:312.50px;top:486.00px;font-size:12px;line-height:16px;color:#b4b4b4;letter-spacing:-0.138px;'>V == 2</span><span class="t" style='left:439.00px;top:486.00px;font-size:12px;line-height:16px;color:#b4b4b4;letter-spacing:-1.300px;'>20</span><span class="t" style='left:622.00px;top:486.00px;font-size:12px;line-height:16px;color:#b4b4b4;letter-spacing:-0.525px;'>ParamGrp</span><span class="t" style='left:723.50px;top:486.00px;font-size:12px;line-height:16px;color:#b4b4b4;letter-spacing:-0.311px;'>base workspace</span><span class="t" style='left:212.30px;top:516.50px;font-size:12px;line-height:16px;color:#111;letter-spacing:-0.633px;'>Diagnostics</span><svg style="left:812px;top:517px" width="14" height="14" viewBox="0 0 14 14">
<circle cx="7" cy="7" r="5.600" fill="#fdfdfd" stroke="#6e6e6e" stroke-width="1"/>
<path d="M4 5.500 H10 L7 9.800 Z" fill="#555"/></svg><div class="a" style="left:206px;top:540px;width:606px;height:22.5px;background:#e9e9e9;border-bottom:1px solid #bdbdbd"></div>
<div class="a" style="left:206px;top:563px;width:606px;height:44px;background:#fff"></div>
<div class="a" style="left:214px;top:541px;width:150px;height:20px;background:#f2f2f2;border:1px solid #8f8f8f;border-radius:5px"></div>
<div class="a" style="left:344px;top:542px;width:1px;height:18px;background:#a8a8a8"></div>
<svg style="left:216.500px;top:543.500px" width="15" height="15" viewBox="0 0 16 16">
<rect x=".5" y=".5" width="15" height="15" rx="2.500" fill="#f5a623" stroke="#8a5a0a"/>
<path d="M2.500 8.500 H5 L6.300 5.500 L8 11 L9.500 7.500 L10.300 8.500 H13.500" fill="none" stroke="#fff" stroke-width="1.100"/></svg><span class="t" style='left:239.50px;top:543.50px;font-size:12px;line-height:16px;color:#111;letter-spacing:-0.033px;'>Viewer</span><svg style="left:348.800px;top:549.500px" width="8.500" height="5" viewBox="0 0 9 5"><path d="M.5 .5 H8.500 L4.500 4.500 Z" fill="#444"/></svg><div class="a" style="left:367px;top:541.5px;width:1px;height:19px;background:#8f8f8f"></div>
<div class="a" style="left:371px;top:541px;width:150px;height:20px;background:#f2f2f2;border:1px solid #8f8f8f;border-radius:5px"></div>
<div class="a" style="left:375px;top:542px;width:126px;height:19px;overflow:hidden"><span class="t" style='left:-0.20px;top:1.50px;font-size:12px;line-height:16px;color:#111;letter-spacing:-0.02px;'>11:35 AM: Updating model</span></div><div class="a" style="left:501px;top:542px;width:1px;height:18px;background:#a8a8a8"></div>
<svg style="left:506.500px;top:549.500px" width="9" height="5" viewBox="0 0 9 5"><path d="M.5 .5 H8.500 L4.500 4.500 Z" fill="#444"/></svg><div class="a" style="left:524px;top:541.5px;width:1px;height:19px;background:#8f8f8f"></div>
<svg style="left:527.500px;top:542.500px" width="17" height="15" viewBox="0 0 17 15">
<rect x=".6" y="9.500" width="15.800" height="4.800" rx="1" fill="#fff" stroke="#5a5a5a" stroke-width="1.100"/>
<path d="M3.600 10 C3.600 6 6 3.800 9.300 3.800 V.8 L15.600 5.300 L9.300 9.600 V6.800 C7.500 6.800 6.300 7.800 6.100 10 Z" fill="#d9f6d2" stroke="#2f9a2f" stroke-width="1.200" stroke-linejoin="round"/>
<rect x="12.300" y="11" width="2.200" height="2.200" fill="#2f9a2f"/></svg><div class="a" style="left:570px;top:541px;width:60px;height:20px;background:#f7f7f7;border:1px solid #8f8f8f;border-radius:6px"></div>
<svg style="left:577px;top:543px" width="17" height="17" viewBox="0 0 17 17">
<path d="M1 1.500 H15.500 L10 8 V15 L7 13 V8 Z" fill="#fff" stroke="#555" stroke-width="1.100" stroke-linejoin="round"/></svg><span class="t" style='left:598.00px;top:543.50px;font-size:12px;line-height:16px;color:#111;letter-spacing:-0.134px;'>Filter</span><div class="a" style="left:643px;top:540.5px;width:1px;height:19px;background:#8f8f8f"></div>
<svg style="left:653px;top:542.500px" width="17" height="17" viewBox="0 0 17 17">
<path d="M5.200 .8 H11.800 L16.200 5.200 V11.800 L11.800 16.200 H5.200 L.8 11.800 V5.200 Z" fill="#c4262e"/>
<rect x="7.400" y="3.500" width="2.300" height="6.500" rx=".6" fill="#fff"/><circle cx="8.500" cy="12.600" r="1.350" fill="#fff"/></svg><span class="t" style='left:674.00px;top:543.50px;font-size:12px;line-height:16px;color:#111;'>0</span><svg style="left:696.500px;top:543px" width="18" height="16" viewBox="0 0 18 16">
<path d="M9 1 L17 15 H1 Z" fill="#f6d44a" stroke="#7a6a1a" stroke-width="1" stroke-linejoin="round"/>
<rect x="8.200" y="5.500" width="1.600" height="5" fill="#222"/><rect x="8.200" y="11.600" width="1.600" height="1.600" fill="#222"/></svg><span class="t" style='left:718.00px;top:543.50px;font-size:12px;line-height:16px;color:#111;'>0</span><svg style="left:741px;top:542.500px" width="17" height="17" viewBox="0 0 17 17">
<circle cx="8.500" cy="8.500" r="7.500" fill="#fff" stroke="#2f8fe0" stroke-width="1.300"/>
<rect x="7.700" y="7" width="1.700" height="6" fill="#1f6fc0"/><circle cx="8.500" cy="4.600" r="1.100" fill="#1f6fc0"/></svg><span class="t" style='left:762.50px;top:543.50px;font-size:12px;line-height:16px;color:#111;'>1</span><div class="a" style="left:782px;top:540.5px;width:1px;height:19px;background:#8f8f8f"></div>
<svg style="left:795px;top:543px" width="6" height="17" viewBox="0 0 6 17">
<circle cx="3" cy="2.500" r="1.400" fill="#444"/><circle cx="3" cy="8.500" r="1.400" fill="#444"/><circle cx="3" cy="14.500" r="1.400" fill="#444"/></svg><div class="a" style="left:223.5px;top:572px;width:4.5px;height:35px;background:#9fd0f5"></div>
<svg style="left:223.500px;top:572px" width="5" height="35" viewBox="0 0 5 35"><path d="M0 2 L5 6 M0 12 L5 16 M0 22 L5 26 M0 32 L5 36" stroke="#4a90d0" stroke-width=".8"/></svg><span class="t" style='left:239.50px;top:573.00px;font-size:11px;line-height:15px;color:#222;font-family:"DejaVu Sans Mono", "Liberation Mono", monospace;letter-spacing:0.005px;'>Successfully activated using base workspace.</span><div class="a" style="left:239px;top:598px;width:300px;height:9px;overflow:hidden"><span class="t" style='left:0.50px;top:4.80px;font-size:11px;line-height:15px;color:#222;font-family:"DejaVu Sans Mono", "Liberation Mono", monospace;'>Component:Simulink | Category:Model</span></div><div class="a" style="left:822px;top:555px;width:2px;height:17px;background:#6f6f6f"></div>
<div class="a" style="left:833px;top:152px;width:1px;height:457px;background:#ababab"></div>
<div class="a" style="left:841px;top:154px;width:22.5px;height:97px;background:#fff;border:1px solid #dadada"></div>
<div class="a" style="left:852.800px;top:164.500px;width:0;height:0;transform:rotate(90deg);transform-origin:0 0"><span class="t" style='left:0.00px;top:-8.00px;font-size:12px;line-height:16px;color:#111;letter-spacing:-0.289px;'>Getting Started</span></div><div class="a" style="left:0px;top:0px;width:867px;height:1px;background:#c9c9c9"></div>
<div class="a" style="left:0px;top:0px;width:1px;height:632px;background:#b4b1ae"></div>
<div class="a" style="left:866px;top:0px;width:1px;height:632px;background:#9a9a9a"></div>
<div class="a" style="left:0px;top:630px;width:867px;height:2px;background:#b9b9b9"></div>
<svg style="left:855px;top:621px" width="8" height="8" viewBox="0 0 8 8">
<g fill="#bdbdbd"><rect x="6" y="0" width="2" height="2"/><rect x="3" y="3" width="2" height="2"/><rect x="6" y="3" width="2" height="2"/><rect x="0" y="6" width="2" height="2"/><rect x="3" y="6" width="2" height="2"/><rect x="6" y="6" width="2" height="2"/></g></svg></body></html>
